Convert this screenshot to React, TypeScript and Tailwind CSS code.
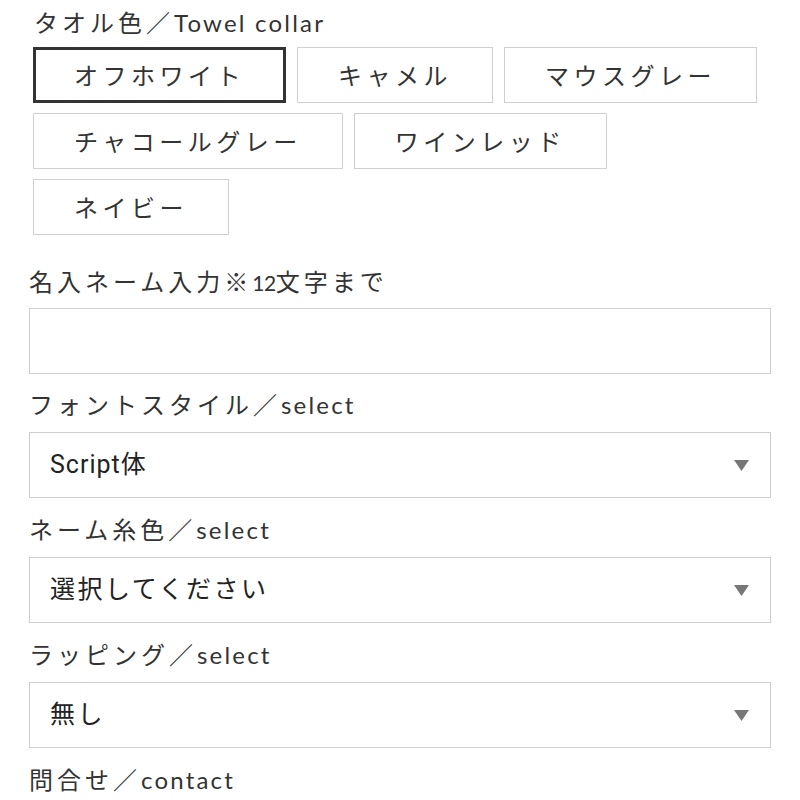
import React from "react";

const latinFont = { fontFamily: '"Lato", "Noto Sans CJK JP", sans-serif' };
const jpFont = { fontFamily: '"Noto Sans CJK JP", sans-serif' };

type Part = { t: string; latin?: boolean; digit?: boolean };

function Label({ parts }: { parts: Part[] }) {
  return (
    <div className="h-[36px] leading-[36px] text-[24px] text-[#333] whitespace-nowrap">
      {parts.map((p, i) =>
        p.digit ? (
          <span key={i} className="text-[21px] tracking-[-0.5px]" style={latinFont}>
            {p.t}
          </span>
        ) : p.latin ? (
          <span key={i} className="tracking-[2.2px]" style={latinFont}>
            {p.t}
          </span>
        ) : (
          <span key={i} className="tracking-[4px]" style={jpFont}>
            {p.t}
          </span>
        )
      )}
    </div>
  );
}

function Select({ value, tracking }: { value: string; tracking: string }) {
  return (
    <div className="mt-[10px] h-[66px] border border-[#cfcfcf] flex items-center justify-between pl-[20px] pr-[21px] bg-white">
      <span
        className={"text-[25px] text-[#222] " + tracking}
        style={{ fontFamily: '"Roboto", "Noto Sans CJK JP", sans-serif' }}
      >
        {value}
      </span>
      <svg width="15" height="11" viewBox="0 0 15 11" aria-hidden="true">
        <polygon points="0,0 15,0 7.5,11" fill="#777" />
      </svg>
    </div>
  );
}

const colors = [
  { name: "オフホワイト", selected: true },
  { name: "キャメル" },
  { name: "マウスグレー" },
  { name: "チャコールグレー" },
  { name: "ワインレッド" },
  { name: "ネイビー" },
];

export default function App() {
  return (
    <div className="w-[800px] h-[800px] bg-white overflow-hidden px-[29px] pt-[4px]">
      <div className="pl-[5px]">
        <Label parts={[{ t: "タオル色／" }, { t: "Towel collar", latin: true }]} />
      </div>
      <div className="mt-[7px] pl-[4px] flex flex-wrap gap-x-[11px] gap-y-[10px] w-[742px]">
        {colors.map((c) => (
          <button
            key={c.name}
            className={
              "h-[56px] px-[40px] border bg-white text-[24px] tracking-[4.5px] text-[#333] flex items-center justify-center " +
              (c.selected
                ? "border-[#333] shadow-[inset_0_0_0_2px_#333]"
                : "border-[#cfcfcf]")
            }
            style={jpFont}
          >
            {c.name}
          </button>
        ))}
      </div>

      <div className="mt-[28px]">
        <Label
          parts={[
            { t: "名入ネーム入力※" },
            { t: "12", digit: true },
            { t: "文字まで" },
          ]}
        />
        <div className="mt-[9px] h-[66px] border border-[#cfcfcf] bg-white" />
      </div>

      <div className="mt-[12px]">
        <Label parts={[{ t: "フォントスタイル／" }, { t: "select", latin: true }]} />
        <Select value="Script体" tracking="tracking-[1px]" />
      </div>

      <div className="mt-[13px]">
        <Label parts={[{ t: "ネーム糸色／" }, { t: "select", latin: true }]} />
        <Select value="選択してください" tracking="tracking-[2.5px]" />
      </div>

      <div className="mt-[13px]">
        <Label parts={[{ t: "ラッピング／" }, { t: "select", latin: true }]} />
        <Select value="無し" tracking="tracking-[2.5px]" />
      </div>

      <div className="mt-[13px]">
        <Label parts={[{ t: "問合せ／" }, { t: "contact", latin: true }]} />
      </div>
    </div>
  );
}
